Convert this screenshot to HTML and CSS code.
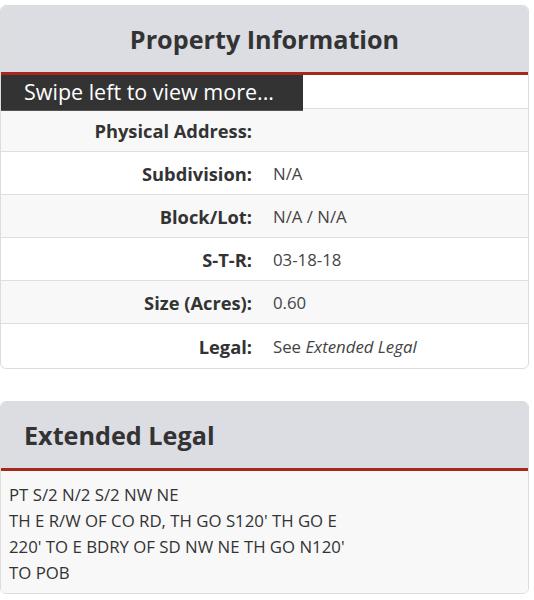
FILE: index.html
```html
<!DOCTYPE html>
<html>
<head>
<meta charset="utf-8">
<link rel="stylesheet" href="styles.css">
</head>
<body>
<section class="card card-info">
  <header class="card-head center"><h2>Property Information</h2></header>
  <div class="info">
    <div class="swipe">Swipe left to view more...</div>
    <div class="row blank"></div>
    <div class="row alt"><span class="lbl">Physical Address:</span><span class="val"></span></div>
    <div class="row"><span class="lbl">Subdivision:</span><span class="val">N/A</span></div>
    <div class="row alt"><span class="lbl">Block/Lot:</span><span class="val">N/A / N/A</span></div>
    <div class="row"><span class="lbl">S-T-R:</span><span class="val">03-18-18</span></div>
    <div class="row alt"><span class="lbl">Size (Acres):</span><span class="val">0.60</span></div>
    <div class="row last"><span class="lbl">Legal:</span><span class="val">See <em>Extended Legal</em></span></div>
  </div>
</section>
<section class="card card-legal">
  <header class="card-head left"><h2>Extended Legal</h2></header>
  <div class="legal-body">PT S/2 N/2 S/2 NW NE<br>TH E R/W OF CO RD, TH GO S120' TH GO E<br>220' TO E BDRY OF SD NW NE TH GO N120'<br>TO POB</div>
</section>
</body>
</html>
```
FILE: styles.css
```css
html, body {
  margin: 0;
  padding: 0;
  background: #ffffff;
}
body {
  font-family: "Open Sans", "Liberation Sans", sans-serif;
  color: #333333;
  padding-top: 5px;
  width: 529px;
}
.card {
  border: 1px solid #dcdcdc;
  border-radius: 6px;
  overflow: hidden;
  background: #ffffff;
}
.card-legal {
  margin-top: 32px;
}
.card-head {
  background: #dcdce3;
  border-bottom: 3px solid #a5281b;
  height: 66px;
  display: flex;
  align-items: center;
}
.card-head h2 {
  margin: 0;
  font-size: 25.2px;
  font-weight: 700;
  color: #333333;
}
.card-head.center {
  justify-content: center;
}
.card-head.left {
  padding-left: 23px;
}
.info {
  position: relative;
}
.swipe {
  position: absolute;
  left: 0;
  top: 0;
  width: 279px;
  height: 35px;
  padding-left: 23px;
  background: #333333;
  color: #ffffff;
  font-size: 21.5px;
  line-height: 34px;
  border-bottom: 1px solid #555;
}
.row {
  display: grid;
  grid-template-columns: 251px 1fr;
  column-gap: 21px;
  height: 42px;
  align-items: center;
  border-bottom: 1px solid #dedede;
}
.row.blank {
  height: 33px;
}
.row.last {
  border-bottom: none;
  height: 44px;
}
.row.alt {
  background: #f8f8f8;
}
.lbl {
  text-align: right;
  font-weight: 700;
  font-size: 18.3px;
  color: #333333;
}
.val {
  font-size: 16.8px;
  color: #444444;
}
.legal-body {
  background: #f8f8f8;
  padding: 11px 8px 7px;
  font-size: 16.8px;
  line-height: 26px;
  color: #333333;
}
```
